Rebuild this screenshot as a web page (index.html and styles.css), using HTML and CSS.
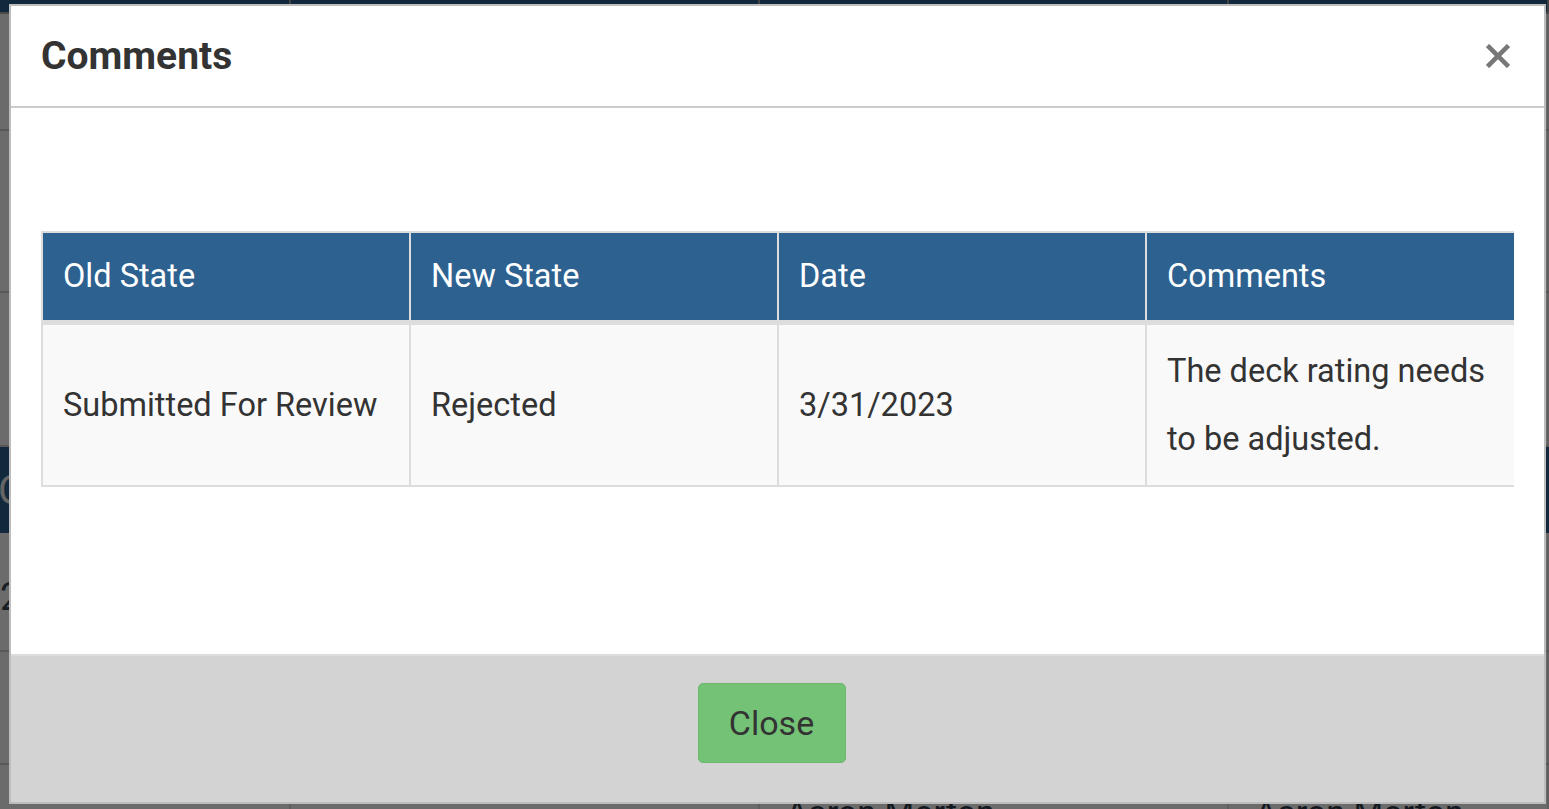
FILE: index.html
```html
<!DOCTYPE html>
<html lang="en">
<head>
<meta charset="UTF-8">
<title>Comments</title>
<link rel="stylesheet" href="styles.css">
</head>
<body>
<div class="page">
<div class="page-bar"><div></div><div></div><div></div><div></div></div>
<div class="page-row h1"><div></div><div></div><div></div><div></div></div>
<div class="page-row h2"><div></div><div></div><div></div><div></div></div>
<div class="page-row h3"><div></div><div></div><div></div><div></div></div>
<div class="page-band"><span>Old State</span></div>
<div class="page-row h5"><div class="page-num">2</div><div></div><div></div><div></div></div>
<div class="page-row h6"><div></div><div></div><div></div><div></div></div>
<div class="page-row h7"><div></div><div></div><div class="page-name">Aaron Morton</div><div class="page-name">Aaron Morton</div></div>
</div>

<div class="backdrop"></div>

<div class="modal">
<div class="modal-header">
<h4 class="modal-title">Comments</h4>
<button class="close" type="button" aria-label="Close">
<svg width="24" height="24" viewBox="0 0 24 24"><path d="M1.5 1.5 L22.5 22.5 M22.5 1.5 L1.5 22.5" stroke="#777" stroke-width="4.6" fill="none"/></svg>
</button>
</div>
<div class="modal-body">
<div class="table-wrap">
<table class="history">
<thead>
<tr>
<th>Old State</th>
<th>New State</th>
<th>Date</th>
<th>Comments</th>
</tr>
</thead>
<tbody>
<tr>
<td>Submitted For Review</td>
<td>Rejected</td>
<td>3/31/2023</td>
<td>The deck rating needs to be adjusted.</td>
</tr>
</tbody>
</table>
</div>
</div>
<div class="modal-footer">
<button class="btn" type="button">Close</button>
</div>
</div>
</body>
</html>
```

FILE: styles.css
```css
body {
margin: 0;
font-family: Roboto, 'Liberation Sans', sans-serif;
color: #333;
overflow: hidden;
}
.page {
background: #fff;
height: 809px;
}
.page-bar, .page-row {
display: grid;
grid-template-columns: 291px 469px 469px 1fr;
}
.page-bar {
height: 12px;
background: #2d6190;
border-bottom: 2px solid #b0b0b0;
}
.page-bar div {
border-right: 2px solid #a0a0a0;
}
.page-row {
border-bottom: 2px solid #d2d2d2;
}
.page-row div {
border-right: 2px solid #e2e2e2;
}
.h1 {height: 115px;}
.h2 {height: 160px;}
.h3 {height: 152px;}
.h5 {height: 117px;}
.h6 {height: 111px;}
.h7 {height: 44px;}
.page-band {
height: 86px;
background: #2d6190;
color: #eee;
font-size: 40px;
display: flex;
align-items: center;
}
.page-band span {
margin-left: -2px;
}
.page-num {
font-size: 38px;
color: #3d4a5e;
padding-top: 42px;
}
.page-name {
font-size: 34px;
line-height: 1;
color: #2e3a4b;
padding: 30px 26px 0;
}
.backdrop {
position: fixed;
inset: 0;
background: rgba(0,0,0,0.58);
}
.modal {
position: fixed;
left: 9px;
top: 4px;
width: 1537px;
height: 800px;
box-sizing: border-box;
border: 2px solid #bdbdbd;
background: #fff;
display: flex;
flex-direction: column;
}
.modal-header {
height: 102px;
box-sizing: border-box;
display: flex;
align-items: center;
justify-content: space-between;
padding: 0 34px 0 30px;
border-bottom: 2px solid #ccc;
}
.modal-title {
margin: 0;
font-size: 39px;
font-weight: 700;
color: #333;
}
.close {
background: none;
border: none;
padding: 0;
width: 24px;
height: 24px;
display: flex;
cursor: pointer;
}
.modal-body {
flex: 1;
padding: 123px 30px 0;
}
.table-wrap {
overflow: hidden;
}
.history {
width: calc(100% + 1px);
table-layout: fixed;
border-collapse: separate;
border-spacing: 0;
border-top: 2px solid #ddd;
border-left: 2px solid #ddd;
font-size: 32.5px;
}
.history th, .history td {
text-align: left;
padding: 0 20px;
border-right: 2px solid #ddd;
vertical-align: middle;
}
.history th:last-child, .history td:last-child {
border-right: none;
}
.history th {
height: 92px;
padding-bottom: 2px;
box-sizing: border-box;
background: #2d6190;
color: #fff;
font-weight: 400;
border-bottom: 5px solid #ddd;
}
.history td {
background: #f9f9f9;
line-height: 68px;
padding: 12px 20px;
border-bottom: 2px solid #ddd;
}
.modal-footer {
height: 148px;
box-sizing: border-box;
border-top: 2px solid #ddd;
background: #d3d3d3;
padding: 27px 12px 0 0;
text-align: center;
}
.btn {
width: 148px;
height: 80px;
font-family: inherit;
font-size: 34px;
color: #333;
background: #74c276;
border: 1px solid #6cb96e;
border-radius: 5px;
cursor: pointer;
}
```
